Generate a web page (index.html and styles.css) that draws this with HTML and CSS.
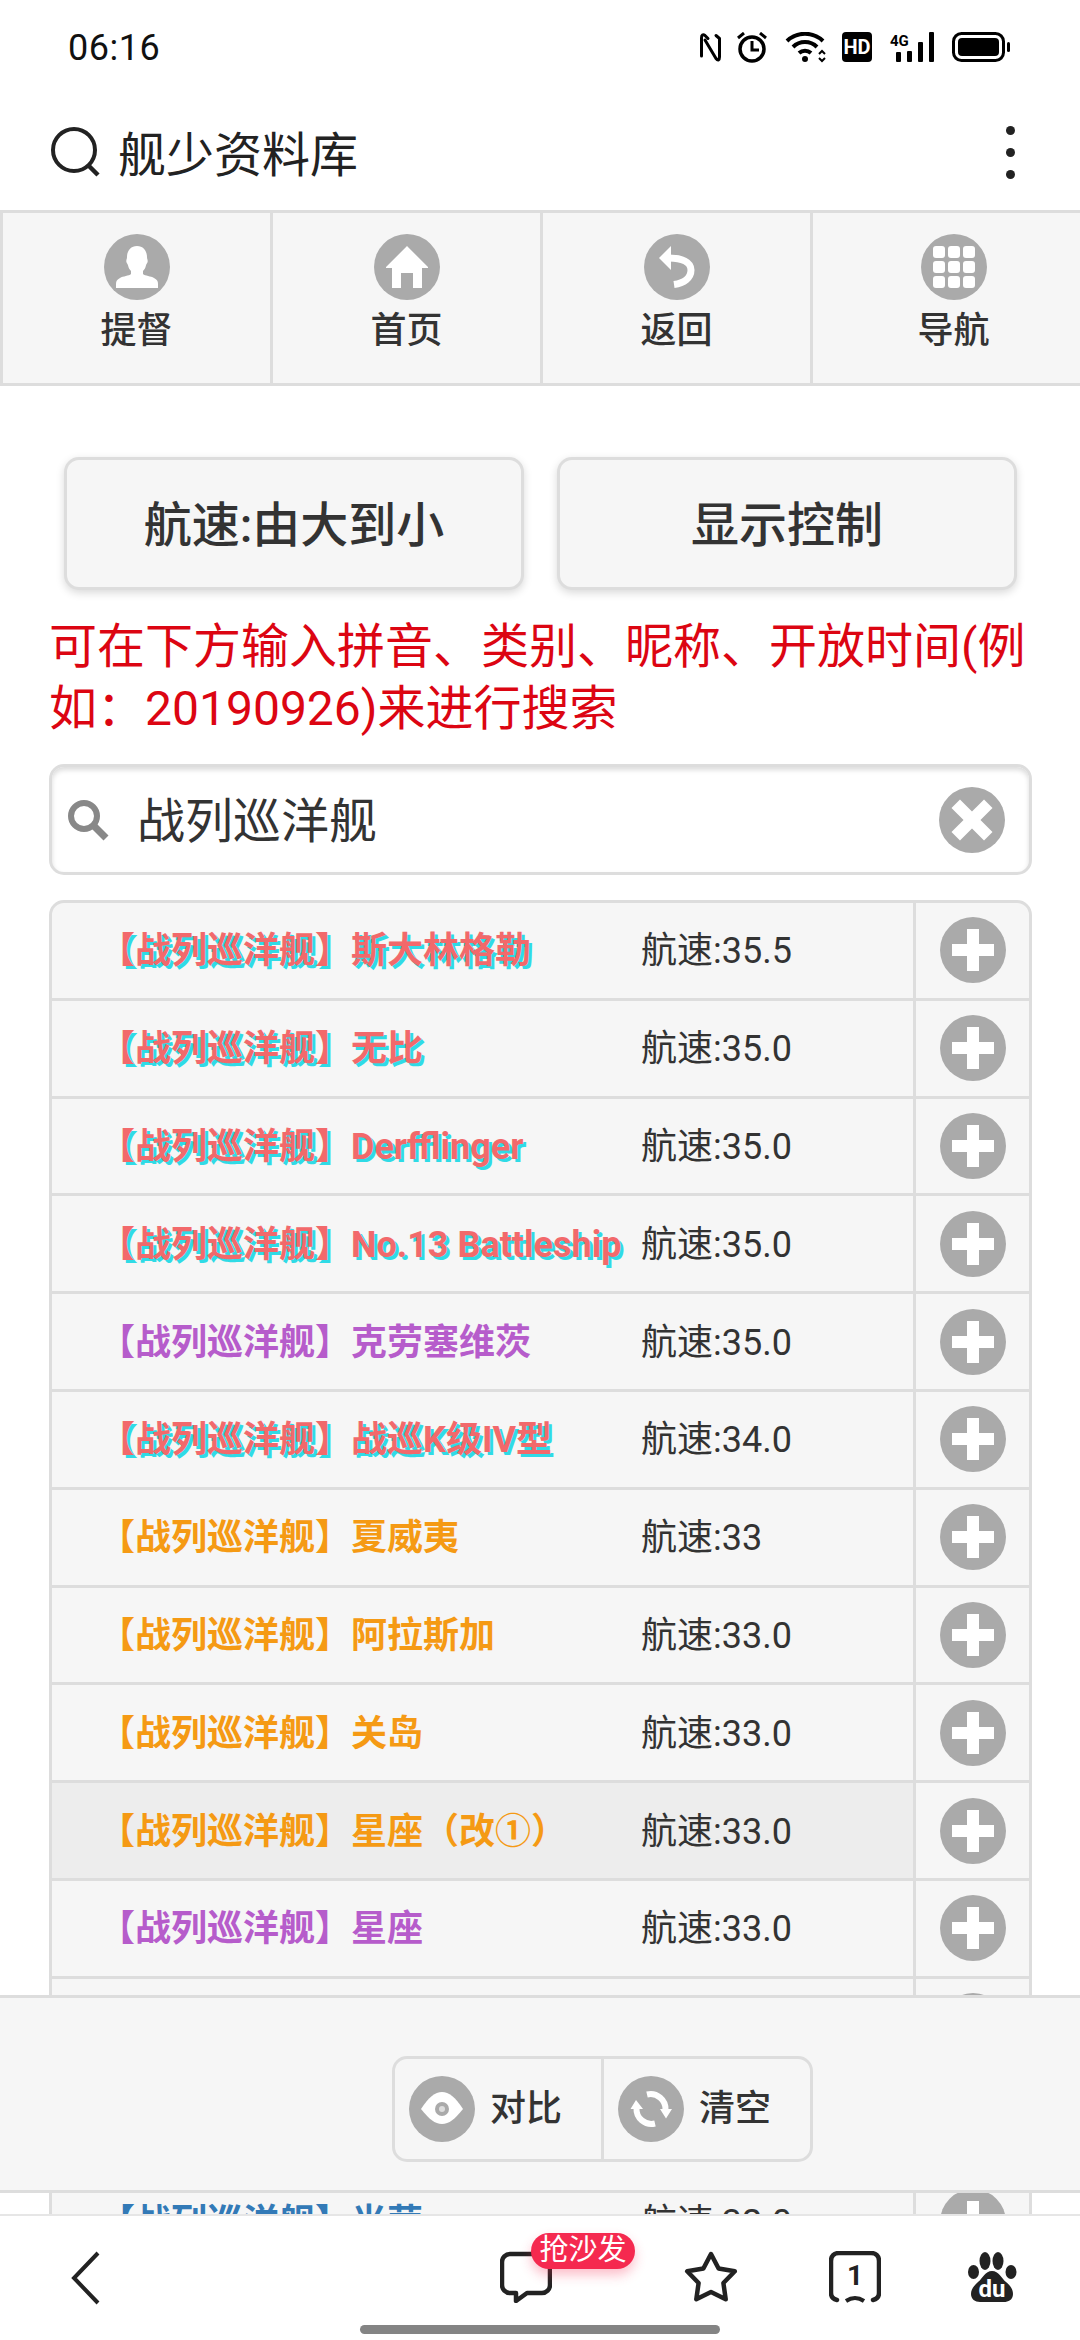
FILE: index.html
```html
<!DOCTYPE html>
<html lang="zh-CN">
<head>
<meta charset="UTF-8">
<meta name="viewport" content="width=device-width, initial-scale=1.0">
<title>舰少资料库</title>
<link rel="stylesheet" href="styles.css">
</head>
<body>
  <!-- shared round icons -->
  <svg class="sprite" width="0" height="0">
    <symbol id="i-user" viewBox="0 0 66 66"><circle cx="33" cy="33" r="33" fill="#aaa"/><path fill="#fff" d="M33 12c-6 0-10 4.500-10 11 0 2-1 3-.6 5 .4 1.500 1.400 2 1.800 4 .5 2 1.300 3.500 2.800 5v3c-2 2-8 2-11 4-3 1.500-4 3-4 6v4h42v-4c0-3-1-4.500-4-6-3-2-9-2-11-4v-3c1.500-1.500 2.300-3 2.800-5 .4-2 1.400-2.500 1.800-4 .4-2-.6-3-.6-5 0-6.500-4-11-10-11z"/></symbol>
    <symbol id="i-home" viewBox="0 0 66 66"><circle cx="33" cy="33" r="33" fill="#aaa"/><path fill="#fff" d="M33 12 54 33v1H48V54H39V39H27V54H18V34H12v-1z"/></symbol>
    <symbol id="i-back" viewBox="0 0 66 66"><circle cx="33" cy="33" r="33" fill="#aaa"/><path fill="#fff" d="M27 12 15 24 27 36z"/><path fill="none" stroke="#fff" stroke-width="7" d="M25 24C38 24 47 28 47 36 47 44 40 49 30 50.500"/></symbol>
    <symbol id="i-grid" viewBox="0 0 66 66"><circle cx="33" cy="33" r="33" fill="#aaa"/><g fill="#fff"><rect x="12" y="12" width="12" height="12" rx="3"/><rect x="27" y="12" width="12" height="12" rx="3"/><rect x="42" y="12" width="12" height="12" rx="3"/><rect x="12" y="27" width="12" height="12" rx="3"/><rect x="27" y="27" width="12" height="12" rx="3"/><rect x="42" y="27" width="12" height="12" rx="3"/><rect x="12" y="42" width="12" height="12" rx="3"/><rect x="27" y="42" width="12" height="12" rx="3"/><rect x="42" y="42" width="12" height="12" rx="3"/></g></symbol>
    <symbol id="i-plus" viewBox="0 0 66 66"><circle cx="33" cy="33" r="33" fill="#aaa"/><path fill="#fff" d="M27 12h12v15h15v12H39v15H27V39H12V27h15z"/></symbol>
    <symbol id="i-close" viewBox="0 0 66 66"><circle cx="33" cy="33" r="33" fill="#aaa"/><path fill="#fff" transform="rotate(45 33 33)" d="M27 10h12v17h17v12H39v17H27V39H10V27h17z"/></symbol>
    <symbol id="i-eye" viewBox="0 0 66 66"><circle cx="33" cy="33" r="33" fill="#aaa"/><path fill="#fff" d="M12 33C20 21 26 16 33 16S46 21 54 33C46 43 40 48 33 48S20 43 12 33z"/><circle cx="33" cy="33" r="7" fill="#aaa"/><circle cx="33" cy="33" r="3" fill="#ddd"/></symbol>
    <symbol id="i-refresh" viewBox="0 0 66 66"><circle cx="33" cy="33" r="33" fill="#aaa"/><g fill="none" stroke="#fff" stroke-width="6"><path d="M18.500 32A15 15 0 0 0 37 47.500"/><path d="M47.500 34A15 15 0 0 0 29 18.500"/></g><path fill="#fff" d="M18 24 12.500 33H25zM48 42.500 42 33H54z"/></symbol>
  </svg>

  <div class="status">
    <span class="time">06:16</span>
    <svg class="status-icons" width="312" height="32" viewBox="0 0 312 32">
      <path fill="none" stroke="#000" stroke-width="3" stroke-linecap="round" stroke-linejoin="round" d="M2.500 24V6C2.500 3 4 2 6 3.500L9 6.500M6 8 17 26.500C19 29 20.500 28 20.500 25V6.500L17 3.500"/>
      <circle cx="53" cy="17" r="12" fill="none" stroke="#000" stroke-width="3.500"/>
      <path fill="none" stroke="#000" stroke-width="3" d="M53 9V18H60M39 6 45 1M67 6 61 1"/>
      <g fill="none" stroke="#000" stroke-width="4"><path d="M88 9A26 26 0 0 1 124 9"/><path d="M94 15A17 17 0 0 1 118 15"/><path d="M100 21A9 9 0 0 1 112 21"/></g>
      <circle cx="106" cy="27" r="3" fill="#000"/>
      <path fill="none" stroke="#000" stroke-width="2" d="M120 22l3-3 3 3M120 26l3 3 3-3"/>
      <rect x="143" y="0" width="30" height="30" rx="4" fill="#000"/>
      <text class="st-hd" x="158" y="22" text-anchor="middle">HD</text>
      <text class="st-4g" x="191" y="14">4G</text>
      <g fill="#000"><rect x="197" y="20" width="5" height="10" rx="1"/><rect x="208" y="19" width="5" height="11" rx="1"/><rect x="219" y="10" width="5" height="20" rx="1"/><rect x="230" y="0" width="5" height="30" rx="1"/></g>
      <rect x="254.500" y="1.500" width="50" height="27" rx="8" fill="none" stroke="#000" stroke-width="3"/>
      <rect x="259" y="6" width="41" height="18" rx="4" fill="#000"/>
      <rect x="308" y="10" width="3" height="10" rx="1.500" fill="#000"/>
    </svg>
  </div>

  <div class="addr">
    <svg class="addr-search" width="50" height="50" viewBox="0 0 50 50"><circle cx="24" cy="23" r="21" fill="none" stroke="#222" stroke-width="4"/><path stroke="#222" stroke-width="4.500" d="M38 38 48 48"/></svg>
    <span class="addr-title">舰少资料库</span>
    <span class="addr-more"><i></i><i></i><i></i></span>
  </div>

  <div class="nav">
    <a class="nav-item"><svg class="ic"><use href="#i-user"/></svg><span>提督</span></a>
    <a class="nav-item"><svg class="ic"><use href="#i-home"/></svg><span>首页</span></a>
    <a class="nav-item"><svg class="ic"><use href="#i-back"/></svg><span>返回</span></a>
    <a class="nav-item nav-last"><svg class="ic"><use href="#i-grid"/></svg><span>导航</span></a>
  </div>

  <div class="content">
    <div class="btns">
      <a class="btn">航速:由大到小</a>
      <a class="btn">显示控制</a>
    </div>
    <p class="hint">可在下方输入拼音、类别、昵称、开放时间(例如：20190926)来进行搜索</p>
    <div class="search">
      <svg class="search-ic" width="42" height="42" viewBox="0 0 42 42"><circle cx="17" cy="17" r="13" fill="none" stroke="#888" stroke-width="6"/><path stroke="#888" stroke-width="7" d="M26 26 39 39"/></svg>
      <span class="search-text">战列巡洋舰</span>
      <svg class="ic"><use href="#i-close"/></svg>
    </div>

    <ul class="list">
      <li class="row"><span class="name red">【战列巡洋舰】斯大林格勒</span><span class="speed">航速:35.5</span><span class="add"><svg class="ic"><use href="#i-plus"/></svg></span></li>
      <li class="row"><span class="name red">【战列巡洋舰】无比</span><span class="speed">航速:35.0</span><span class="add"><svg class="ic"><use href="#i-plus"/></svg></span></li>
      <li class="row"><span class="name red">【战列巡洋舰】Derfflinger</span><span class="speed">航速:35.0</span><span class="add"><svg class="ic"><use href="#i-plus"/></svg></span></li>
      <li class="row"><span class="name red">【战列巡洋舰】No.13 Battleship</span><span class="speed">航速:35.0</span><span class="add"><svg class="ic"><use href="#i-plus"/></svg></span></li>
      <li class="row"><span class="name purple">【战列巡洋舰】克劳塞维茨</span><span class="speed">航速:35.0</span><span class="add"><svg class="ic"><use href="#i-plus"/></svg></span></li>
      <li class="row"><span class="name red">【战列巡洋舰】战巡K级IV型</span><span class="speed">航速:34.0</span><span class="add"><svg class="ic"><use href="#i-plus"/></svg></span></li>
      <li class="row"><span class="name orange">【战列巡洋舰】夏威夷</span><span class="speed">航速:33</span><span class="add"><svg class="ic"><use href="#i-plus"/></svg></span></li>
      <li class="row"><span class="name orange">【战列巡洋舰】阿拉斯加</span><span class="speed">航速:33.0</span><span class="add"><svg class="ic"><use href="#i-plus"/></svg></span></li>
      <li class="row"><span class="name orange">【战列巡洋舰】关岛</span><span class="speed">航速:33.0</span><span class="add"><svg class="ic"><use href="#i-plus"/></svg></span></li>
      <li class="row row-hover"><span class="name orange">【战列巡洋舰】星座（改①）</span><span class="speed">航速:33.0</span><span class="add"><svg class="ic"><use href="#i-plus"/></svg></span></li>
      <li class="row"><span class="name purple">【战列巡洋舰】星座</span><span class="speed">航速:33.0</span><span class="add"><svg class="ic"><use href="#i-plus"/></svg></span></li>
      <li class="row"><span class="add add-only"><svg class="ic"><use href="#i-plus"/></svg></span></li>
      <li class="row"><span class="add add-only"><svg class="ic"><use href="#i-plus"/></svg></span></li>
      <li class="row"><span class="name blue">【战列巡洋舰】光荣</span><span class="speed">航速:32.0</span><span class="add"><svg class="ic"><use href="#i-plus"/></svg></span></li>
    </ul>
  </div>

  <!-- fixed compare bar, lies over the list -->
  <div class="compare">
    <div class="compare-group">
      <a class="compare-btn"><svg class="ic"><use href="#i-eye"/></svg><span>对比</span></a>
      <a class="compare-btn"><svg class="ic"><use href="#i-refresh"/></svg><span>清空</span></a>
    </div>
  </div>

  <!-- browser toolbar -->
  <div class="toolbar">
    <svg class="tool tool-back" width="30" height="54" viewBox="0 0 30 54"><path fill="none" stroke="#222" stroke-width="4" d="M27 2 3 27 27 52"/></svg>
    <span class="tool tool-comment">
      <svg width="52" height="52" viewBox="0 0 52 52"><path fill="none" stroke="#222" stroke-width="4.500" stroke-linejoin="round" d="M10 3H42a8 8 0 0 1 8 8V34a8 8 0 0 1-8 8H27L16 50V42H10a8 8 0 0 1-8-8V11a8 8 0 0 1 8-8z"/></svg>
      <b class="badge">抢沙发</b>
    </span>
    <svg class="tool tool-star" width="56" height="52" viewBox="0 0 56 52"><path fill="none" stroke="#222" stroke-width="4.500" stroke-linejoin="round" d="M28 3 35.600 17.500 51.800 20.300 40.400 32 42.700 48.200 28 41 13.300 48.200 15.600 32 4.200 20.300 20.400 17.500z"/></svg>
    <svg class="tool tool-tab" width="52" height="52" viewBox="0 0 52 52"><path fill="none" stroke="#222" stroke-width="4.500" stroke-linecap="round" d="M8 49C4 48 2 46 2 42V10C2 5 5 2 10 2H42C47 2 50 5 50 10V42C50 46 48 48 44 49"/><path fill="none" stroke="#222" stroke-width="4" d="M17 50Q26 44 35 50"/><text class="tab-num" x="26" y="34" text-anchor="middle">1</text></svg>
    <svg class="tool tool-paw" width="50" height="52" viewBox="0 0 50 52"><g fill="#222"><ellipse cx="5.500" cy="21" rx="5.500" ry="7"/><ellipse cx="17" cy="10" rx="5.500" ry="9"/><ellipse cx="30" cy="10" rx="5.500" ry="9"/><ellipse cx="43" cy="21" rx="5.500" ry="7"/><path d="M24 20C31 20 33 27 38 31 43 35 45 39 45 43 45 49 40 51 36 51H12C7 51 3 48 3 43 3 38 6 35 10 31 15 27 17 20 24 20z"/></g><text class="paw-du" x="24" y="46" text-anchor="middle">du</text></svg>
  </div>
  <div class="home-pill"></div>
</body>
</html>
```

FILE: styles.css
```css
* {
  box-sizing: border-box;
}

html,
body {
  margin: 0;
  height: 2340px;
  overflow: hidden;
}

body {
  position: relative;
  width: 1080px;
  background-color: #fff;
  color: #333;
  font-family: Roboto, "Noto Sans CJK SC", sans-serif;
}

.sprite {
  position: absolute;
}

.ic {
  display: block;
  flex: none;
  width: 66px;
  height: 66px;
}

/* status bar */
.status {
  display: flex;
  justify-content: space-between;
  align-items: center;
  height: 94px;
  padding: 2px 69px 0 68px;
}

.time {
  font-size: 36px;
  letter-spacing: 0.5px;
  color: #111;
}

.status-icons {
  display: block;
}

.st-hd {
  font-size: 20px;
  font-weight: 700;
  fill: #fff;
}

.st-4g {
  font-size: 15px;
  font-weight: 700;
  fill: #000;
}

/* address bar */
.addr {
  display: flex;
  align-items: center;
  height: 116px;
  padding: 0 65px 0 50px;
}

.addr-title {
  margin: 0 0 3px 18px;
  font-size: 48px;
  color: #222;
}

.addr-more {
  display: flex;
  flex-direction: column;
  gap: 13px;
  margin-left: auto;
}

.addr-more i {
  display: block;
  width: 9px;
  height: 9px;
  border-radius: 50%;
  background-color: #222;
}

/* top nav */
.nav {
  display: flex;
  height: 176px;
  background-color: #f6f6f6;
  border-top: 3px solid #ddd;
  border-bottom: 3px solid #ddd;
}

.nav-item {
  display: flex;
  flex-direction: column;
  align-items: center;
  width: 270px;
  padding-top: 21px;
  border-right: 3px solid #ddd;
  font-size: 36px;
  font-weight: 500;
  line-height: 46px;
}

.nav-item:first-child {
  width: 273px;
  border-left: 3px solid #ddd;
}

.nav-item span {
  margin-top: 8px;
}

.nav-last {
  flex: 1;
  padding-left: 14px;
  border-right: 0;
}

/* page body */
.content {
  padding: 71px 48px 0 49px;
}

.btns {
  display: grid;
  grid-template-columns: 1fr 1fr;
  gap: 33px;
  margin: 0 15px;
}

.btn {
  display: flex;
  justify-content: center;
  align-items: center;
  height: 133px;
  padding-bottom: 6px;
  background-color: #f6f6f6;
  border: 3px solid #ddd;
  border-radius: 15px;
  box-shadow: 0 3px 9px rgba(0, 0, 0, 0.15);
  font-size: 48px;
  font-weight: 500;
}

.hint {
  margin: 26px 0 24px;
  font-size: 48px;
  line-height: 62px;
  color: #dc0512;
}

.search {
  display: flex;
  align-items: center;
  height: 111px;
  padding: 0 24px 0 15px;
  background-color: #fff;
  border: 3px solid #ddd;
  border-radius: 15px;
  box-shadow: inset 0 3px 5px rgba(0, 0, 0, 0.14);
}

.search-ic {
  flex: none;
}

.search-text {
  flex: 1;
  margin: 0 0 6px 28px;
  font-size: 48px;
  color: #333;
}

/* result list */
.list {
  margin: 25px 0 0;
  padding: 0;
  list-style: none;
  background-color: #f6f6f6;
  border: 3px solid #ddd;
  border-radius: 15px 15px 0 0;
}

.row {
  display: flex;
  align-items: center;
  height: 97.8px;
  border-bottom: 3px solid #ddd;
  font-size: 36px;
  white-space: nowrap;
}

.name {
  display: flex;
  align-items: center;
  width: 589px;
  height: 100%;
  padding: 0 0 6px 47px;
  font-weight: 700;
}

.speed {
  display: flex;
  align-items: center;
  width: 272px;
  height: 100%;
  padding-bottom: 6px;
}

.row-hover .name,
.row-hover .speed {
  background-color: #ededed;
}

.add {
  display: flex;
  justify-content: center;
  align-items: center;
  flex: 1;
  height: 100%;
  border-left: 3px solid #ddd;
}

.add-only {
  flex: none;
  width: 116px;
  margin-left: 861px;
}

.red {
  color: #f2696b;
  text-shadow: 3px 3px 0 #2fdbe6;
}

.purple {
  color: #b65ccb;
}

.orange {
  color: #f59a14;
}

.blue {
  color: #337ab7;
}

/* compare bar over the list */
.compare {
  position: absolute;
  top: 1995px;
  left: 0;
  width: 1080px;
  height: 198px;
  padding: 58px 0 0 392px;
  background-color: #f6f6f6;
  border-top: 3px solid #ddd;
  border-bottom: 3px solid #ddd;
}

.compare-group {
  display: flex;
  width: 421px;
  height: 106px;
  border: 3px solid #ddd;
  border-radius: 15px;
}

.compare-btn {
  display: flex;
  align-items: center;
  flex: 1;
  gap: 15px;
  padding-left: 14px;
  font-size: 36px;
  font-weight: 500;
}

.compare-btn span {
  margin-bottom: 9px;
}

.compare-btn + .compare-btn {
  border-left: 3px solid #ddd;
}

/* browser toolbar */
.toolbar {
  position: absolute;
  top: 2214px;
  left: 0;
  display: flex;
  align-items: flex-start;
  width: 1080px;
  height: 126px;
  padding-top: 35px;
  background-color: #fff;
  border-top: 2px solid #e6e6e6;
}

.tool {
  display: block;
  flex: none;
}

.tool-back {
  margin-left: 71px;
}

.tool-comment {
  position: relative;
  margin-left: 399px;
  width: 52px;
  height: 52px;
}

.tool-comment svg {
  display: block;
}

.badge {
  position: absolute;
  top: -18px;
  left: 31px;
  width: 104px;
  height: 36px;
  background-color: #f5294f;
  border-radius: 18px;
  box-shadow: 0 6px 12px rgba(245, 41, 79, 0.3);
  color: #fff;
  font-size: 29px;
  font-weight: 400;
  line-height: 34px;
  text-align: center;
}

.tool-star {
  margin-left: 131px;
}

.tool-tab {
  margin-left: 90px;
}

.tool-paw {
  margin-left: 87px;
}

.tab-num {
  font-size: 28px;
  font-weight: 700;
  fill: #222;
}

.paw-du {
  font-size: 24px;
  font-weight: 700;
  fill: #fff;
}

.home-pill {
  position: absolute;
  left: 360px;
  top: 2325px;
  width: 360px;
  height: 9px;
  background-color: #848484;
  border-radius: 5px;
}
```
